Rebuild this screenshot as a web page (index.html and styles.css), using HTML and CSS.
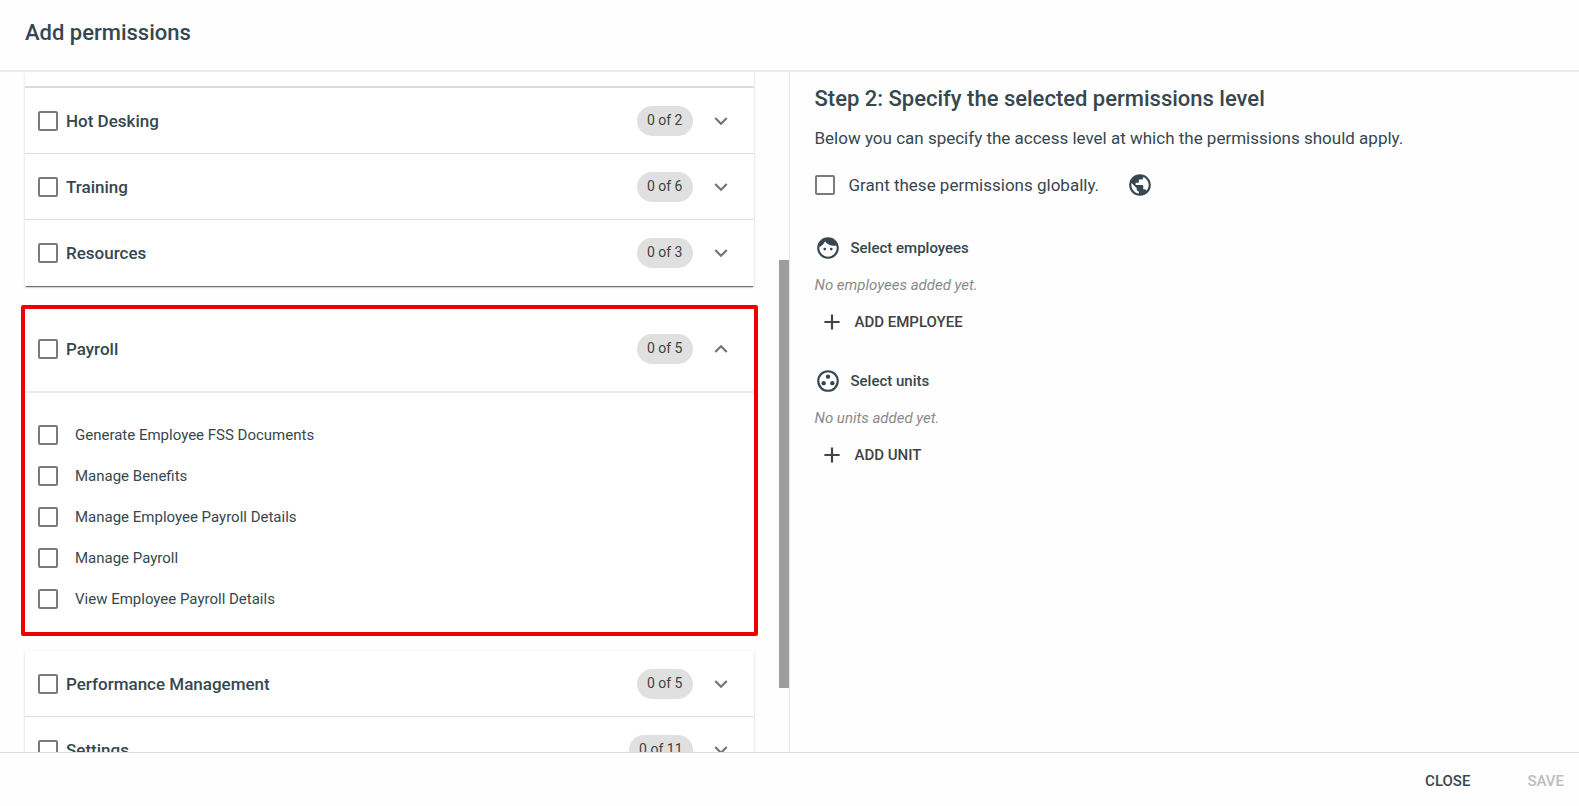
FILE: index.html
```html
<!DOCTYPE html>
<html lang="en">
<head>
    <meta charset="UTF-8">
    <meta name="viewport" content="width=device-width, initial-scale=1.0">
    <title>Add permissions</title>
    <link rel="stylesheet" href="styles.css">
</head>
<body>
    <svg class="sprite" aria-hidden="true">
        <symbol id="chevron-down" viewBox="0 0 24 24"><path d="M16.59 8.59 12 13.17 7.41 8.59 6 10l6 6 6-6z"/></symbol>
        <symbol id="chevron-up" viewBox="0 0 24 24"><path d="m12 8-6 6 1.41 1.41L12 10.83l4.59 4.58L18 14z"/></symbol>
        <symbol id="plus" viewBox="0 0 24 24"><path d="M19 13h-6v6h-2v-6H5v-2h6V5h2v6h6v2z"/></symbol>
    </svg>

    <header class="header">
        <h1 class="title">Add permissions</h1>
    </header>

    <main class="content">
        <section class="permissions">
            <div class="list">
                <div class="card card-first">
                    <div class="row row-cut"></div>
                    <div class="row">
                        <label class="group"><input type="checkbox" class="checkbox">Hot Desking</label>
                        <span class="chip">0 of 2</span>
                        <button class="toggle" aria-label="Expand Hot Desking"><svg class="icon"><use href="#chevron-down"/></svg></button>
                    </div>
                    <div class="row">
                        <label class="group"><input type="checkbox" class="checkbox">Training</label>
                        <span class="chip">0 of 6</span>
                        <button class="toggle" aria-label="Expand Training"><svg class="icon"><use href="#chevron-down"/></svg></button>
                    </div>
                    <div class="row">
                        <label class="group"><input type="checkbox" class="checkbox">Resources</label>
                        <span class="chip">0 of 3</span>
                        <button class="toggle" aria-label="Expand Resources"><svg class="icon"><use href="#chevron-down"/></svg></button>
                    </div>
                </div>

                <div class="card card-open">
                    <div class="row row-open">
                        <label class="group"><input type="checkbox" class="checkbox">Payroll</label>
                        <span class="chip">0 of 5</span>
                        <button class="toggle" aria-label="Collapse Payroll"><svg class="icon"><use href="#chevron-up"/></svg></button>
                    </div>
                    <div class="items">
                        <label class="item"><input type="checkbox" class="checkbox">Generate Employee FSS Documents</label>
                        <label class="item"><input type="checkbox" class="checkbox">Manage Benefits</label>
                        <label class="item"><input type="checkbox" class="checkbox">Manage Employee Payroll Details</label>
                        <label class="item"><input type="checkbox" class="checkbox">Manage Payroll</label>
                        <label class="item"><input type="checkbox" class="checkbox">View Employee Payroll Details</label>
                    </div>
                </div>

                <div class="card">
                    <div class="row">
                        <label class="group"><input type="checkbox" class="checkbox">Performance Management</label>
                        <span class="chip">0 of 5</span>
                        <button class="toggle" aria-label="Expand Performance Management"><svg class="icon"><use href="#chevron-down"/></svg></button>
                    </div>
                    <div class="row">
                        <label class="group"><input type="checkbox" class="checkbox">Settings</label>
                        <span class="chip">0 of 11</span>
                        <button class="toggle" aria-label="Expand Settings"><svg class="icon"><use href="#chevron-down"/></svg></button>
                    </div>
                </div>
            </div>
            <div class="scrollbar"><div class="thumb"></div></div>
        </section>

        <section class="level">
            <h2 class="title">Step 2: Specify the selected permissions level</h2>
            <p class="text">Below you can specify the access level at which the permissions should apply.</p>
            <div class="global">
                <label class="global-label"><input type="checkbox" class="checkbox">Grant these permissions globally.</label>
                <svg class="icon" viewBox="0 0 24 24"><path d="M12 2C6.48 2 2 6.48 2 12s4.48 10 10 10 10-4.48 10-10S17.52 2 12 2zm-1 17.93c-3.95-.49-7-3.85-7-7.93 0-.62.08-1.21.21-1.79L9 15v1c0 1.1.9 2 2 2v1.93zm6.9-2.54c-.26-.81-1-1.39-1.9-1.39h-1v-3c0-.55-.45-1-1-1H8v-2h2c.55 0 1-.45 1-1V7h2c1.1 0 2-.9 2-2v-.41c2.93 1.19 5 4.06 5 7.41 0 2.08-.8 3.97-2.1 5.39z"/></svg>
            </div>

            <div class="picker">
                <h3 class="subtitle">
                    <svg class="icon" viewBox="0 0 24 24"><path d="M9 11.75a1.25 1.25 0 1 0 0 2.5 1.25 1.25 0 0 0 0-2.5zm6 0a1.25 1.25 0 1 0 0 2.5 1.25 1.25 0 0 0 0-2.5zM12 2C6.48 2 2 6.48 2 12s4.48 10 10 10 10-4.48 10-10S17.52 2 12 2zm0 18c-4.41 0-8-3.59-8-8 0-.29.02-.58.05-.86 2.36-1.05 4.23-2.98 5.21-5.37C11.07 8.33 14.05 10 17.42 10c.78 0 1.53-.09 2.25-.26.21.71.33 1.47.33 2.26 0 4.41-3.59 8-8 8z"/></svg>
                    Select employees
                </h3>
                <p class="empty">No employees added yet.</p>
                <button class="add"><svg class="icon"><use href="#plus"/></svg>ADD EMPLOYEE</button>
            </div>

            <div class="picker">
                <h3 class="subtitle">
                    <svg class="icon" viewBox="0 0 24 24"><circle cx="12" cy="12" r="9" fill="none" stroke="currentColor" stroke-width="2"/><circle cx="12" cy="8" r="2"/><circle cx="8" cy="14" r="2"/><circle cx="16" cy="14" r="2"/></svg>
                    Select units
                </h3>
                <p class="empty">No units added yet.</p>
                <button class="add"><svg class="icon"><use href="#plus"/></svg>ADD UNIT</button>
            </div>
        </section>
    </main>

    <footer class="footer">
        <button class="action">CLOSE</button>
        <button class="action" disabled>SAVE</button>
    </footer>
</body>
</html>
```
FILE: styles.css
```css
* {
    box-sizing: border-box;
}

body {
    font-family: Roboto, sans-serif;
    color: #37474f;
    background-color: #fefefe;
    margin: 0;
    height: 100vh;
    display: flex;
    flex-direction: column;
    overflow: hidden;
}

h1, h2, h3, p {
    margin: 0;
}

button {
    font-family: inherit;
    background: none;
    border: none;
    padding: 0;
    cursor: pointer;
}

.sprite {
    display: none;
}

.icon {
    width: 26px;
    height: 26px;
    fill: currentColor;
    flex-shrink: 0;
}

.header {
    padding: 20px 25px;
    height: 72px;
    border-bottom: 2px solid #ebebeb;
    flex-shrink: 0;
}

.title {
    font-size: 22px;
    line-height: 26px;
    font-weight: 500;
}

.content {
    flex: 1;
    min-height: 0;
    display: flex;
}

.permissions {
    width: 50%;
    border-right: 1px solid #e6e6e6;
    display: flex;
    overflow: hidden;
}

.list {
    flex: 1;
    padding: 0 25px;
}

.scrollbar {
    width: 10px;
    display: flex;
    flex-direction: column;
}

.thumb {
    margin-top: 188px;
    height: 63%;
    background-color: #9e9e9e;
}

.card {
    background-color: #fff;
    box-shadow: 0 1px 2px rgba(0, 0, 0, 0.2);
}

.card-first {
    box-shadow: 0 2px 1px -1px rgba(0, 0, 0, 0.5), 0 1px 2px rgba(0, 0, 0, 0.2);
}

/* Payroll is highlighted with a red outline */
.card-open {
    margin: 19px -4px 15px;
    border: 4px solid #f00000;
    border-radius: 2px;
    box-shadow: none;
}

.row {
    display: flex;
    align-items: center;
    height: 66px;
    padding: 0 20px 0 13px;
    border-bottom: 1px solid #dcdcdc;
}

.row:last-child {
    border-bottom: none;
}

.row-cut {
    height: 16px;
    border-bottom-width: 2px;
}

.row-open {
    height: 84px;
    border-bottom: 2px solid #ebebeb;
    padding-bottom: 3px;
}

.group {
    flex: 1;
    display: flex;
    align-items: center;
    gap: 8px;
    font-size: 17px;
    line-height: 24px;
    font-weight: 500;
}

.checkbox {
    appearance: none;
    width: 20px;
    height: 20px;
    margin: 0;
    border: 2px solid #7b7b7b;
    border-radius: 2px;
    background-color: #fff;
    flex-shrink: 0;
}

.checkbox:checked {
    background-color: #7b7b7b;
}

.chip {
    background-color: #e0e0e0;
    color: #424242;
    font-size: 14px;
    line-height: 28px;
    padding: 0 10px 2px;
    border-radius: 15px;
}

.toggle {
    margin-left: 15px;
    height: 26px;
    color: #757575;
}

.items {
    padding: 21px 13px 13px;
}

.item {
    display: flex;
    align-items: center;
    gap: 17px;
    height: 41px;
    font-size: 15px;
}

.level {
    flex: 1;
    padding: 14px 25px;
}

.text {
    font-size: 17px;
    line-height: 24px;
    margin-top: 14px;
}

.global {
    display: flex;
    align-items: center;
    gap: 28px;
    margin-top: 22px;
    padding-bottom: 4px;
}

.global-label {
    display: flex;
    align-items: center;
    gap: 14px;
    font-size: 17px;
}

.picker {
    margin-top: 33px;
}

.subtitle {
    display: flex;
    align-items: center;
    gap: 10px;
    font-size: 15px;
    line-height: 26px;
    font-weight: 500;
}

.empty {
    color: #8a8a8a;
    font-size: 15px;
    font-style: italic;
    line-height: 20px;
    margin-top: 14px;
}

.add {
    display: flex;
    align-items: center;
    gap: 10px;
    margin-top: 14px;
    padding-left: 4px;
    color: #424242;
    font-size: 15px;
    font-weight: 500;
}

.footer {
    display: flex;
    justify-content: flex-end;
    align-items: center;
    gap: 57px;
    height: 54px;
    padding: 2px 15px 0;
    border-top: 1px solid #dcdcdc;
    flex-shrink: 0;
}

.action {
    color: #37474f;
    font-size: 15px;
    font-weight: 500;
}

.action:disabled {
    color: #bdbdbd;
    cursor: default;
}
```
